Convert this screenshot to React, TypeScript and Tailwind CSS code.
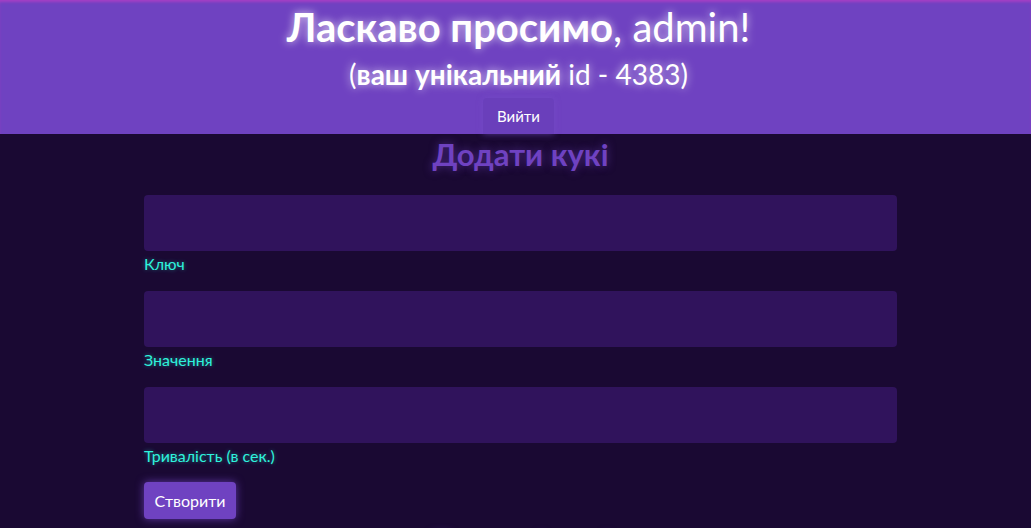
import React from "react";

export default function App() {
  const font = { fontFamily: "Lato, 'Noto Sans', sans-serif" };
  return (
    <div className="min-h-[528px] h-[528px] overflow-hidden bg-[#1a0933]" style={font}>
      <header className="bg-[#6f42c1] shadow-[inset_0_3px_3px_-1px_#a63fc4] flex flex-col items-center pl-[6px] pt-[3px]">
        <h1 className="text-[40px] leading-[48px] text-white [text-shadow:0_0_8px_rgba(255,255,255,0.75)]">
          <span className="font-bold">Ласкаво просимо</span>, admin!
        </h1>
        <h2 className="mt-[3px] text-[28px] leading-[40px] text-white [text-shadow:0_0_8px_rgba(255,255,255,0.75)]">
          (<span className="font-bold">ваш унікальний</span> id - 4383)
        </h2>
        <button className="mt-[4px] h-[36px] px-[14px] text-[15px] text-white bg-[#6a3fbb] rounded-t-[4px] shadow-[0_0_6px_rgba(120,80,200,0.6)]">
          Вийти
        </button>
      </header>
      <main className="pl-[10px] flex flex-col items-center">
        <h3 className="mt-[-2px] text-[31px] leading-[44px] font-bold text-[#6f42c1] [text-shadow:0_0_8px_rgba(111,66,193,0.6)]">
          Додати кукі
        </h3>
        <form className="w-[753px] mt-[19px] flex flex-col">
          {["Ключ", "Значення", "Тривалість (в сек.)"].map((l, i) => (
            <div key={l} className={i > 0 ? "mt-[16px]" : ""}>
              <input className="block w-full h-[56px] rounded-[4px] bg-[#30135c] outline-none border-0" />
              <label className="block mt-[2px] text-[16px] leading-[22px] text-[#2ef2dc] [text-shadow:0_0_4px_rgba(46,242,220,0.45)]">
                {l}
              </label>
            </div>
          ))}
          <div className="mt-[15px]">
            <button
              type="button"
              className="h-[37px] w-[92px] rounded-[4px] bg-[#6f42c1] text-white text-[16px] shadow-[0_0_8px_rgba(111,66,193,0.8)]"
            >
              Створити
            </button>
          </div>
        </form>
        <h3 className="mt-[2px] text-[31px] leading-[44px] font-bold text-[#6f42c1] [text-shadow:0_0_8px_rgba(111,66,193,0.6)]">
          Поточні кукі
        </h3>
      </main>
    </div>
  );
}
